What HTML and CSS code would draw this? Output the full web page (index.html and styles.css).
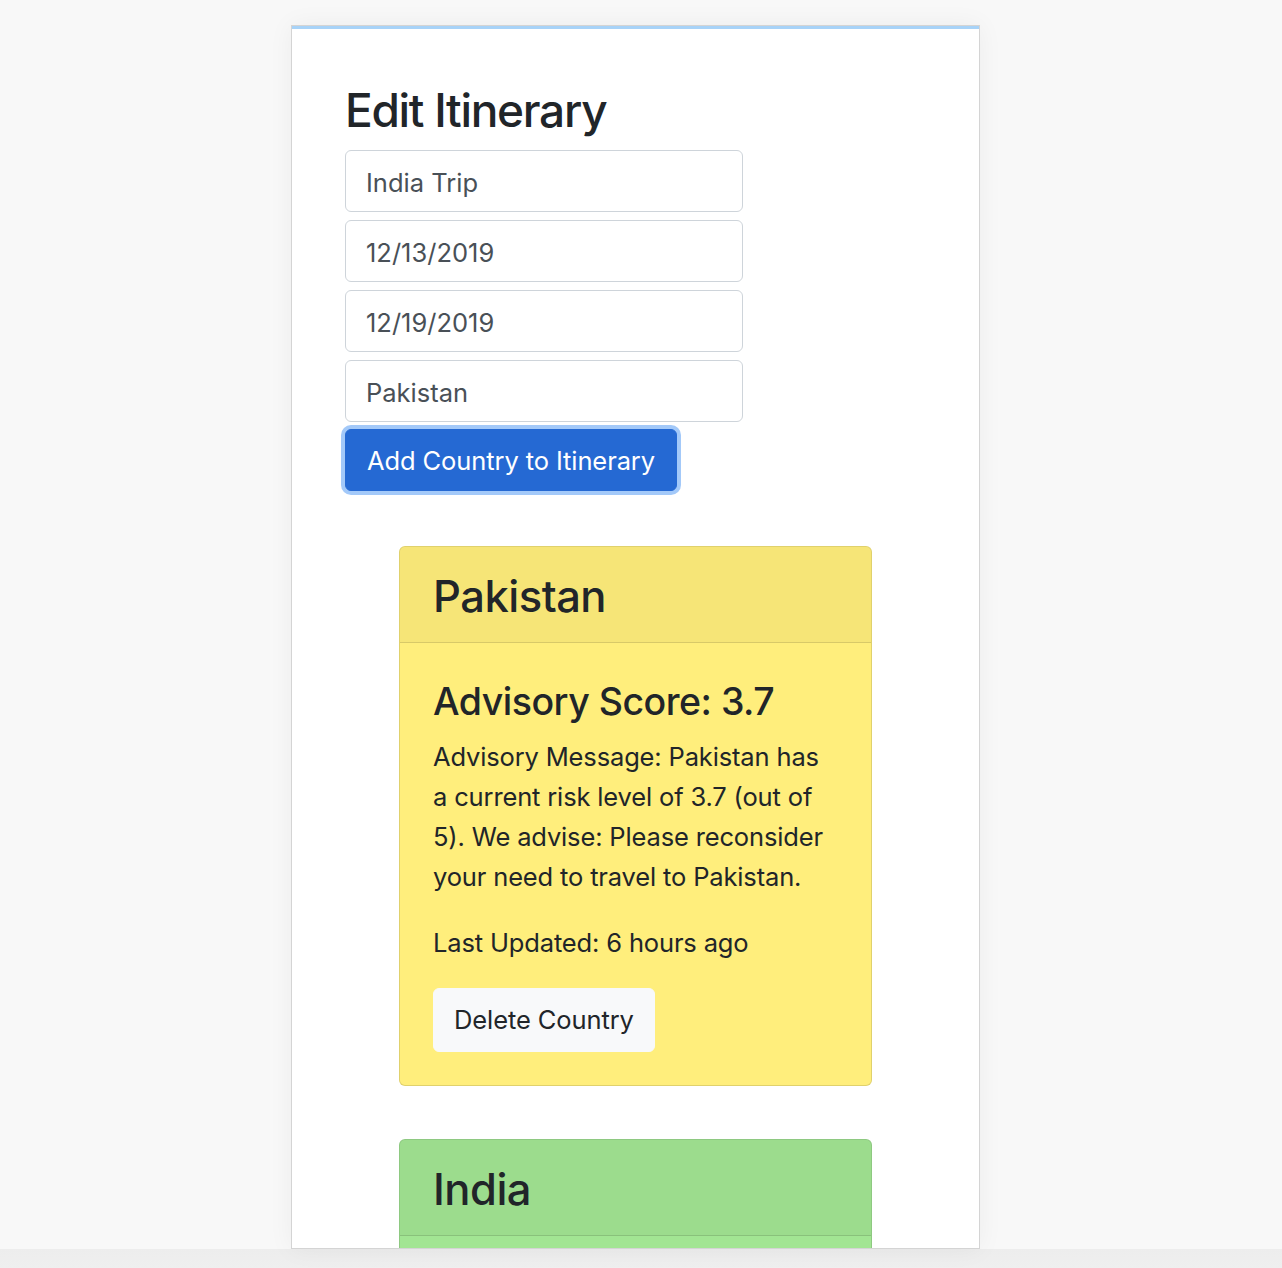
FILE: index.html
```html
<!DOCTYPE html>
<html lang="en">
<head>
<meta charset="utf-8">
<title>Edit Itinerary</title>
<link rel="stylesheet" href="styles.css">
</head>
<body>
<div class="frame">
  <div class="topbar"></div>
  <div class="content">
    <h2 class="title">Edit Itinerary</h2>
    <form class="form">
      <input class="field" type="text" value="India Trip">
      <input class="field" type="text" value="12/13/2019">
      <input class="field" type="text" value="12/19/2019">
      <input class="field" type="text" value="Pakistan">
      <button type="button" class="btn btn-primary">Add Country to Itinerary</button>
    </form>
    <div class="cards">
      <div class="card card-yellow">
        <div class="card-header"><h3>Pakistan</h3></div>
        <div class="card-body">
          <h4>Advisory Score: 3.7</h4>
          <p>Advisory Message: Pakistan has a current risk level of 3.7 (out of 5). We advise: Please reconsider your need to travel to Pakistan.</p>
          <p class="updated">Last Updated: 6 hours ago</p>
          <button type="button" class="btn btn-light">Delete Country</button>
        </div>
      </div>
      <div class="card card-green">
        <div class="card-header"><h3>India</h3></div>
        <div class="card-body card-body-empty"></div>
      </div>
    </div>
  </div>
</div>
</body>
</html>
```
FILE: styles.css
```css
html, body {
  margin: 0;
  padding: 0;
}
body {
  height: 1268px;
  overflow: hidden;
  background: linear-gradient(to bottom, #f8f8f8 0, #f8f8f8 1249px, #ededed 1249px, #efefef 100%);
  font-family: Inter, "Noto Sans", Roboto, sans-serif;
  color: #212529;
  padding-top: 25px;
  padding-left: 291px;
  box-sizing: border-box;
}
.frame {
  width: 689px;
  height: 1224px;
  box-sizing: border-box;
  border: 1px solid #d4d4d4;
  background: #fff;
  overflow: hidden;
  box-shadow: 0 0 24px rgba(0, 0, 0, 0.05);
}
.topbar {
  height: 3px;
  background: #a8d3f8;
}
.content {
  padding: 0 53px 0 53px;
}
.title {
  font-size: 46px;
  font-weight: 500;
  line-height: 57px;
  margin: 53px 0 11px;
  letter-spacing: -1.3px;
}
.form {
  display: flex;
  flex-direction: column;
  align-items: flex-start;
  gap: 8px;
}
.field {
  width: 398px;
  height: 62px;
  box-sizing: border-box;
  border: 1px solid #ced4da;
  border-radius: 6px;
  padding: 2px 20px 0;
  font-family: inherit;
  font-size: 25.5px;
  color: #495057;
  background: #fff;
  outline: none;
}
.btn {
  font-family: inherit;
  font-size: 25.5px;
  line-height: 40px;
  padding: 11px 20px;
  border-radius: 6px;
  border: 1px solid transparent;
  cursor: pointer;
  letter-spacing: -0.1px;
}
.btn-primary {
  background: #2569d3;
  border-color: #2569d3;
  color: #fff;
  box-shadow: 0 0 0 4px #a3c9f9;
  margin-top: -1px;
  padding: 11px 21px 9px;
}
.btn-light {
  background: #f8f9fa;
  border-color: #f8f9fa;
  color: #212529;
}
.cards {
  display: flex;
  flex-direction: column;
  align-items: center;
  gap: 53px;
  margin: 55px -53px 0;
}
.card {
  width: 473px;
  box-sizing: border-box;
  border: 1px solid rgba(0, 0, 0, 0.12);
  border-radius: 6px;
  overflow: hidden;
}
.card-yellow {
  background: #ffee7c;
}
.card-green {
  background: #a2e593;
}
.card-header {
  padding: 22px 33px 18px;
  background: rgba(0, 0, 0, 0.035);
  border-bottom: 1px solid rgba(0, 0, 0, 0.12);
}
.card-header h3 {
  margin: 0;
  font-size: 43.5px;
  font-weight: 500;
  line-height: 55px;
  letter-spacing: -0.5px;
}
.card-body {
  padding: 33px;
}
.card-body-empty {
  height: 80px;
}
.card-body h4 {
  margin: 2px 0 11px;
  font-size: 37.5px;
  font-weight: 500;
  line-height: 48px;
  letter-spacing: -0.5px;
}
.card-body p {
  margin: 0 0 26px;
  font-size: 25.5px;
  line-height: 40px;
  letter-spacing: -0.15px;
}
.card-body p.updated {
  margin-bottom: 25px;
}
```
